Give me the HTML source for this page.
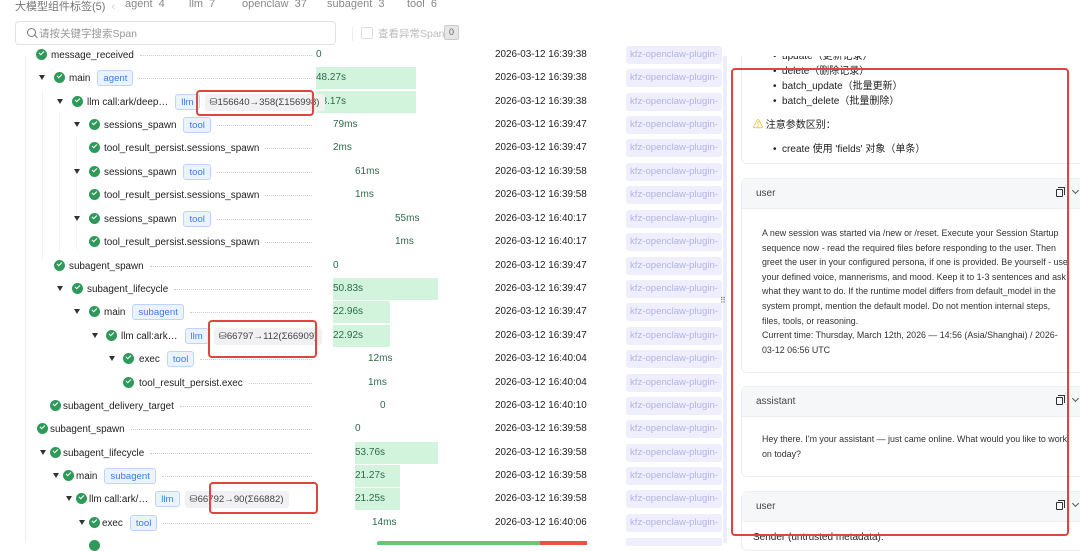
<!DOCTYPE html>
<html><head><meta charset="utf-8"><style>
*{box-sizing:border-box;margin:0;padding:0}
body{width:1080px;height:543px;overflow:hidden;background:#fff;font-family:"Liberation Sans","Noto Sans CJK SC",sans-serif;font-size:9.9px;color:#222;position:relative}
.a{position:absolute;white-space:nowrap}
.row{position:absolute;left:0;height:22px;width:724px}
.car{position:absolute;top:8px;width:0;height:0;border-left:3.5px solid transparent;border-right:3.5px solid transparent;border-top:5px solid #333}
.chk{position:absolute;top:5px;width:11px;height:11px;border-radius:50%;background:#2e9a5a}
.chk:after{content:"";position:absolute;left:3px;top:2.3px;width:4px;height:2.2px;border-left:1.3px solid #fff;border-bottom:1.3px solid #fff;transform:rotate(-45deg)}
.nm{position:absolute;top:0;height:22px;display:flex;align-items:center;right:412px}
.nm.b{right:auto}
.nm .t{flex:none;color:#222}
.tag{flex:none;margin-left:7px;padding:0 5px;height:16px;line-height:15px;border:1px solid #bcd6fb;background:#eaf3ff;color:#3b7be6;border-radius:3px;font-size:9.6px}
.bd{flex:none;margin-left:5px;padding:0 5px;height:17px;line-height:17px;background:#f1f1f3;color:#444;border-radius:3px;font-size:9.6px}
.dot{flex:1;margin-left:6px;border-top:1px dotted #ccc;height:0;min-width:4px}
.bar{position:absolute;top:0;height:22px;background:#d3f4dc}
.dur{position:absolute;top:5px;color:#2b6b4a;font-size:10px}
.tm{position:absolute;left:495px;top:5px;color:#222}
.svc{position:absolute;left:626px;top:2px;width:96px;height:18px;background:#eeeefc;color:#b3b3e6;border-radius:3px;font-size:9.6px;line-height:18px;padding-left:4px;overflow:hidden}
.red{position:absolute;border:2px solid #e0443e;border-radius:4px}
.card{position:absolute;left:741px;width:345px;border:1px solid #eceef2;border-radius:6px;background:#fff}
.ch{height:30px;background:#f6f7f9;border-bottom:1px solid #eceef2;padding-left:14px;line-height:30px;color:#444;font-size:10px;position:relative}
.ico{position:absolute;right:22px;top:10px;width:7px;height:8px;border:1.2px solid #333;border-radius:1px}
.ico:before{content:"";position:absolute;left:1px;top:-3px;width:6px;height:7px;border-top:1.2px solid #333;border-right:1.2px solid #333}
.chev{position:absolute;right:7px;top:9px;width:5px;height:5px;border-right:1.2px solid #555;border-bottom:1.2px solid #555;transform:rotate(45deg)}
.cb{padding:10px 16px 10px 20px;font-size:8.9px;line-height:14.6px;color:#333}
</style></head><body>

<!-- header -->
<div class="a" style="left:15px;top:-2px;color:#777;font-size:11px">大模型组件标签(5) <span style="color:#ccc">&nbsp;‹</span></div>
<div class="a" style="left:125px;top:-2px;color:#888;font-size:11px">agent&nbsp; 4</div>
<div class="a" style="left:189px;top:-2px;color:#888;font-size:11px">llm&nbsp; 7</div>
<div class="a" style="left:242px;top:-2px;color:#888;font-size:11px">openclaw&nbsp; 37</div>
<div class="a" style="left:327px;top:-2px;color:#888;font-size:11px">subagent&nbsp; 3</div>
<div class="a" style="left:407px;top:-2px;color:#888;font-size:11px">tool&nbsp; 6</div>
<div class="a" style="left:15px;top:21px;width:321px;height:24px;border:1px solid #e2e2e2;border-radius:4px;"></div>
<div class="a" style="left:27px;top:28px;width:9px;height:9px;border:1.3px solid #777;border-radius:50%"></div>
<div class="a" style="left:34px;top:36px;width:4px;height:1.3px;background:#777;transform:rotate(45deg)"></div>
<div class="a" style="left:39px;top:26px;color:#999;font-size:10.5px">请按关键字搜索Span</div>
<div class="a" style="left:352px;top:27px;width:1px;height:14px;background:#eee"></div>
<div class="a" style="left:361px;top:27px;width:12px;height:12px;border:1px solid #ddd;border-radius:2px"></div>
<div class="a" style="left:378px;top:26px;color:#bbb;font-size:10.5px">查看异常Span</div>
<div class="a" style="left:444px;top:25px;width:15px;height:15px;background:#e6e6e6;border:1px solid #ccc;border-radius:2px;font-size:9px;text-align:center;line-height:13px;color:#666">0</div>

<!-- tree guide lines -->
<div class="a" style="left:25px;top:56px;width:1px;height:487px;background:#f0f0f0"></div>
<div class="a" style="left:42px;top:90px;width:1px;height:170px;background:#f3f3f3"></div>
<div class="a" style="left:59px;top:113px;width:1px;height:140px;background:#f3f3f3"></div>
<div class="a" style="left:76px;top:136px;width:1px;height:115px;background:#f3f3f3"></div>

<!-- rows -->
<div class="row" style="top:44px">
 <div class="chk" style="left:36px"></div>
 <div class="nm" style="left:51px"><span class="t">message_received</span><span class="dot"></span></div>
 <div class="dur" style="left:316px">0</div>
 <div class="tm">2026-03-12 16:39:38</div><div class="svc">kfz-openclaw-plugin-tes</div>
</div>
<div class="row" style="top:67px">
 <div class="car" style="left:39px"></div><div class="chk" style="left:54px"></div>
 <div class="nm" style="left:69px"><span class="t">main</span><span class="tag">agent</span><span class="dot"></span></div>
 <div class="bar" style="left:316px;width:100px"></div><div class="dur" style="left:316px">48.27s</div>
 <div class="tm">2026-03-12 16:39:38</div><div class="svc">kfz-openclaw-plugin-tes</div>
</div>
<div class="row" style="top:91px">
 <div class="car" style="left:57px"></div><div class="chk" style="left:72px"></div>
 <div class="bar" style="left:316px;width:100px"></div><div class="dur" style="left:316px">48.17s</div>
 <div class="nm b" style="left:87px"><span class="t">llm call:ark/deep…</span><span class="tag">llm</span><span class="bd">⛁156640→358(Σ156998)</span></div>
 <div class="tm">2026-03-12 16:39:38</div><div class="svc">kfz-openclaw-plugin-tes</div>
</div>
<div class="row" style="top:114px">
 <div class="car" style="left:74px"></div><div class="chk" style="left:89px"></div>
 <div class="nm" style="left:104px"><span class="t">sessions_spawn</span><span class="tag">tool</span><span class="dot"></span></div>
 <div class="dur" style="left:333px">79ms</div>
 <div class="tm">2026-03-12 16:39:47</div><div class="svc">kfz-openclaw-plugin-tes</div>
</div>
<div class="row" style="top:137px">
 <div class="chk" style="left:89px"></div>
 <div class="nm" style="left:104px"><span class="t">tool_result_persist.sessions_spawn</span><span class="dot"></span></div>
 <div class="dur" style="left:333px">2ms</div>
 <div class="tm">2026-03-12 16:39:47</div><div class="svc">kfz-openclaw-plugin-tes</div>
</div>
<div class="row" style="top:161px">
 <div class="car" style="left:74px"></div><div class="chk" style="left:89px"></div>
 <div class="nm" style="left:104px"><span class="t">sessions_spawn</span><span class="tag">tool</span><span class="dot"></span></div>
 <div class="dur" style="left:355px">61ms</div>
 <div class="tm">2026-03-12 16:39:58</div><div class="svc">kfz-openclaw-plugin-tes</div>
</div>
<div class="row" style="top:184px">
 <div class="chk" style="left:89px"></div>
 <div class="nm" style="left:104px"><span class="t">tool_result_persist.sessions_spawn</span><span class="dot"></span></div>
 <div class="dur" style="left:355px">1ms</div>
 <div class="tm">2026-03-12 16:39:58</div><div class="svc">kfz-openclaw-plugin-tes</div>
</div>
<div class="row" style="top:208px">
 <div class="car" style="left:74px"></div><div class="chk" style="left:89px"></div>
 <div class="nm" style="left:104px"><span class="t">sessions_spawn</span><span class="tag">tool</span><span class="dot"></span></div>
 <div class="dur" style="left:395px">55ms</div>
 <div class="tm">2026-03-12 16:40:17</div><div class="svc">kfz-openclaw-plugin-tes</div>
</div>
<div class="row" style="top:231px">
 <div class="chk" style="left:89px"></div>
 <div class="nm" style="left:104px"><span class="t">tool_result_persist.sessions_spawn</span><span class="dot"></span></div>
 <div class="dur" style="left:395px">1ms</div>
 <div class="tm">2026-03-12 16:40:17</div><div class="svc">kfz-openclaw-plugin-tes</div>
</div>
<div class="row" style="top:255px">
 <div class="chk" style="left:54px"></div>
 <div class="nm" style="left:69px"><span class="t">subagent_spawn</span><span class="dot"></span></div>
 <div class="dur" style="left:333px">0</div>
 <div class="tm">2026-03-12 16:39:47</div><div class="svc">kfz-openclaw-plugin-tes</div>
</div>
<div class="row" style="top:278px">
 <div class="car" style="left:57px"></div><div class="chk" style="left:72px"></div>
 <div class="nm" style="left:87px"><span class="t">subagent_lifecycle</span><span class="dot"></span></div>
 <div class="bar" style="left:333px;width:105px"></div><div class="dur" style="left:333px">50.83s</div>
 <div class="tm">2026-03-12 16:39:47</div><div class="svc">kfz-openclaw-plugin-tes</div>
</div>
<div class="row" style="top:301px">
 <div class="car" style="left:74px"></div><div class="chk" style="left:89px"></div>
 <div class="nm" style="left:104px"><span class="t">main</span><span class="tag">subagent</span><span class="dot"></span></div>
 <div class="bar" style="left:333px;width:57px"></div><div class="dur" style="left:333px">22.96s</div>
 <div class="tm">2026-03-12 16:39:47</div><div class="svc">kfz-openclaw-plugin-tes</div>
</div>
<div class="row" style="top:325px">
 <div class="car" style="left:92px"></div><div class="chk" style="left:106px"></div>
 <div class="bar" style="left:333px;width:57px"></div><div class="dur" style="left:333px">22.92s</div>
 <div class="nm b" style="left:121px"><span class="t">llm call:ark…</span><span class="tag">llm</span><span class="bd">⛁66797→112(Σ66909)</span></div>
 <div class="tm">2026-03-12 16:39:47</div><div class="svc">kfz-openclaw-plugin-tes</div>
</div>
<div class="row" style="top:348px">
 <div class="car" style="left:109px"></div><div class="chk" style="left:123px"></div>
 <div class="nm" style="left:139px"><span class="t">exec</span><span class="tag">tool</span><span class="dot"></span></div>
 <div class="dur" style="left:368px">12ms</div>
 <div class="tm">2026-03-12 16:40:04</div><div class="svc">kfz-openclaw-plugin-tes</div>
</div>
<div class="row" style="top:372px">
 <div class="chk" style="left:123px"></div>
 <div class="nm" style="left:139px"><span class="t">tool_result_persist.exec</span><span class="dot"></span></div>
 <div class="dur" style="left:368px">1ms</div>
 <div class="tm">2026-03-12 16:40:04</div><div class="svc">kfz-openclaw-plugin-tes</div>
</div>
<div class="row" style="top:395px">
 <div class="chk" style="left:50px"></div>
 <div class="nm" style="left:63px"><span class="t">subagent_delivery_target</span><span class="dot"></span></div>
 <div class="dur" style="left:380px">0</div>
 <div class="tm">2026-03-12 16:40:10</div><div class="svc">kfz-openclaw-plugin-tes</div>
</div>
<div class="row" style="top:418px">
 <div class="chk" style="left:37px"></div>
 <div class="nm" style="left:50px"><span class="t">subagent_spawn</span><span class="dot"></span></div>
 <div class="dur" style="left:355px">0</div>
 <div class="tm">2026-03-12 16:39:58</div><div class="svc">kfz-openclaw-plugin-tes</div>
</div>
<div class="row" style="top:442px">
 <div class="car" style="left:40px"></div><div class="chk" style="left:50px"></div>
 <div class="nm" style="left:63px"><span class="t">subagent_lifecycle</span><span class="dot"></span></div>
 <div class="bar" style="left:355px;width:83px"></div><div class="dur" style="left:355px">53.76s</div>
 <div class="tm">2026-03-12 16:39:58</div><div class="svc">kfz-openclaw-plugin-tes</div>
</div>
<div class="row" style="top:465px">
 <div class="car" style="left:53px"></div><div class="chk" style="left:63px"></div>
 <div class="nm" style="left:76px"><span class="t">main</span><span class="tag">subagent</span><span class="dot"></span></div>
 <div class="bar" style="left:355px;width:45px"></div><div class="dur" style="left:355px">21.27s</div>
 <div class="tm">2026-03-12 16:39:58</div><div class="svc">kfz-openclaw-plugin-tes</div>
</div>
<div class="row" style="top:488px">
 <div class="car" style="left:66px"></div><div class="chk" style="left:76px"></div>
 <div class="bar" style="left:355px;width:45px"></div><div class="dur" style="left:355px">21.25s</div>
 <div class="nm b" style="left:89px"><span class="t">llm call:ark/…</span><span class="tag">llm</span><span class="bd">⛁66792→90(Σ66882)</span></div>
 <div class="tm">2026-03-12 16:39:58</div><div class="svc">kfz-openclaw-plugin-tes</div>
</div>
<div class="row" style="top:512px">
 <div class="car" style="left:79px"></div><div class="chk" style="left:89px"></div>
 <div class="nm" style="left:102px"><span class="t">exec</span><span class="tag">tool</span><span class="dot"></span></div>
 <div class="dur" style="left:372px">14ms</div>
 <div class="tm">2026-03-12 16:40:06</div><div class="svc">kfz-openclaw-plugin-tes</div>
</div>
<div class="a" style="left:89px;top:540px;width:11px;height:11px;border-radius:50%;background:#2e9a5a"></div>
<div class="a" style="left:377px;top:541px;width:163px;height:4px;background:#66c77a;border-radius:2px 0 0 0"></div>
<div class="a" style="left:540px;top:541px;width:47px;height:4px;background:#e5534b"></div>
<div class="a" style="left:626px;top:538px;width:96px;height:8px;background:#eeeefc"></div>

<!-- red boxes left -->
<div class="red" style="left:196px;top:90px;width:118px;height:26px"></div>
<div class="red" style="left:208px;top:320px;width:109px;height:38px"></div>
<div class="red" style="left:209px;top:482px;width:109px;height:32px"></div>

<!-- splitter -->
<div class="a" style="left:723px;top:56px;width:4px;height:487px;background:#eceefa"></div>
<div class="a" style="left:720px;top:296px;color:#666;font-size:8px">⠿</div>

<!-- right panel -->
<div class="a" style="left:727px;top:56px;width:353px;height:487px;background:#fff"></div>
<div class="card" style="top:40px;height:124px;border-top:0;border-radius:0 0 6px 6px">
 <div style="position:absolute;left:31px;top:9px;font-size:10px;line-height:15px;color:#222">
  <div>•&nbsp; update（更新记录）</div>
  <div>•&nbsp; delete（删除记录）</div>
  <div>•&nbsp; batch_update（批量更新）</div>
  <div>•&nbsp; batch_delete（批量删除）</div>
  <div style="margin:9px 0 0 -20px"><span style="color:#e5a500">⚠</span> 注意参数区别：</div>
  <div style="margin-top:9px">•&nbsp; create 使用 'fields' 对象（单条）</div>
 </div>
</div>
<div class="a" style="left:727px;top:40px;width:353px;height:16px;background:#fff"></div>
<div class="card" style="top:178px;height:195px">
 <div class="ch">user<span class="ico"></span><span class="chev"></span></div>
 <div class="cb" style="padding-top:17px">A new session was started via /new or /reset. Execute your Session Startup sequence now - read the required files before responding to the user. Then greet the user in your configured persona, if one is provided. Be yourself - use your defined voice, mannerisms, and mood. Keep it to 1-3 sentences and ask what they want to do. If the runtime model differs from default_model in the system prompt, mention the default model. Do not mention internal steps, files, tools, or reasoning.<br>Current time: Thursday, March 12th, 2026 — 14:56 (Asia/Shanghai) / 2026-03-12 06:56 UTC</div>
</div>
<div class="card" style="top:386px;height:91px">
 <div class="ch">assistant<span class="ico"></span><span class="chev"></span></div>
 <div class="cb" style="padding-top:15px">Hey there. I'm your assistant — just came online. What would you like to work on today?</div>
</div>
<div class="card" style="top:491px;height:60px">
 <div class="ch">user<span class="ico"></span><span class="chev"></span></div>
</div>
<div class="a" style="left:753px;top:532px;font-size:10px;color:#222">Sender (untrusted metadata):</div>
<div class="red" style="left:731px;top:68px;width:338px;height:468px;border-width:2.5px"></div>
</body></html>
